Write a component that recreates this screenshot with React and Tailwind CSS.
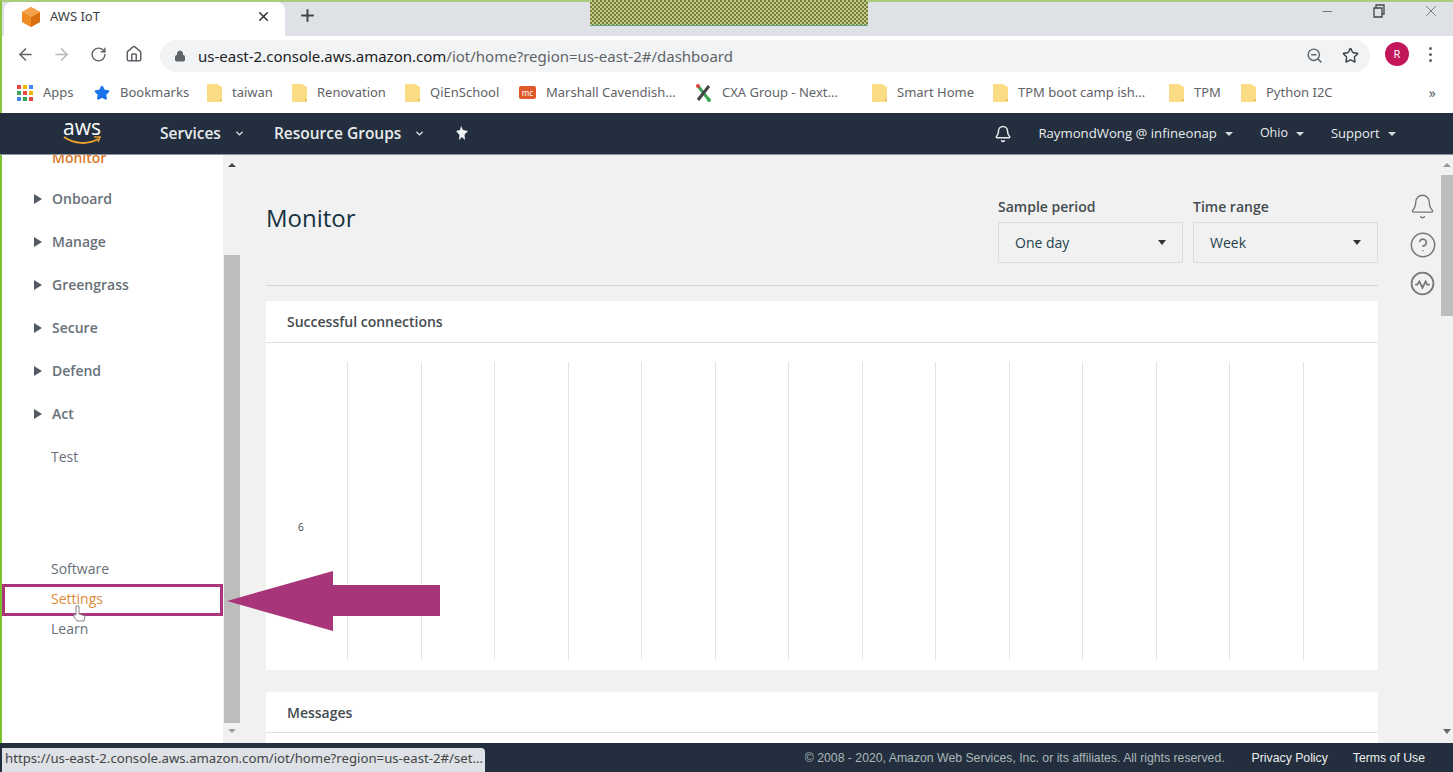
import React from 'react'
import { ArrowLeft, ArrowRight, RotateCw, House, Lock, ZoomOut, Star, Bell, CircleHelp, X, Plus, Minus, ChevronDown } from 'lucide-react'

const uiFont = "font-['Noto_Sans',sans-serif]"
const consoleFont = "font-['Open_Sans',sans-serif]"

const Folder = () => (
  <svg width="15" height="20" viewBox="0 0 15 20" className="shrink-0">
    <path d="M0 1h10l5 3v15H0z" fill="#fbdc85" />
    <path d="M13 19v-3h2z" fill="#d9b95c" />
  </svg>
)

const AppsGrid = () => {
  const colors = ['#e8453c', '#f4b400', '#4285f4', '#34a853', '#e8453c', '#f4b400', '#4285f4', '#34a853', '#e8453c']
  return (
    <div className="grid grid-cols-3 gap-[2px] w-[16px] shrink-0">
      {colors.map((c, i) => (
        <span key={i} className="w-1 h-1" style={{ background: c }} />
      ))}
    </div>
  )
}

const McIcon = () => (
  <div className="w-[17px] h-[13px] bg-[#e0592a] rounded-[2px] text-white text-[8px] leading-[13px] text-center shrink-0">mc</div>
)

const CxaIcon = () => (
  <svg width="17" height="20" viewBox="0 0 17 20" className="shrink-0">
    <path d="M3 3l11 14" stroke="#3aa655" strokeWidth="3" />
    <path d="M14 3L3 17" stroke="#444" strokeWidth="3" />
    <circle cx="3" cy="3" r="2" fill="#d9443a" />
    <circle cx="14" cy="17" r="2" fill="#3aa655" />
  </svg>
)

const bookmarks = [
  { icon: <AppsGrid />, label: 'Apps', cls: 'w-[31px]' },
  { icon: <Star size={16} fill="#1a73e8" stroke="#1a73e8" className="shrink-0" />, label: 'Bookmarks', cls: 'w-[67px]' },
  { icon: <Folder />, label: 'taiwan', cls: 'w-[40px]' },
  { icon: <Folder />, label: 'Renovation', cls: 'w-[68px]' },
  { icon: <Folder />, label: 'QiEnSchool', cls: 'w-[69px]' },
  { icon: <McIcon />, label: 'Marshall Cavendish...', cls: 'w-[126px] mr-[3px]' },
  { icon: <CxaIcon />, label: 'CXA Group - Next...', cls: 'w-[120px] mr-[10px]' },
  { icon: <Folder />, label: 'Smart Home', cls: 'w-[76px]' },
  { icon: <Folder />, label: 'TPM boot camp ish...', cls: 'w-[128px] mr-[3px]' },
  { icon: <Folder />, label: 'TPM', cls: 'w-[27px]' },
  { icon: <Folder />, label: 'Python I2C', cls: 'w-[66px]' },
]

const navItems = [
  { label: 'Onboard', arrow: true },
  { label: 'Manage', arrow: true },
  { label: 'Greengrass', arrow: true },
  { label: 'Secure', arrow: true },
  { label: 'Defend', arrow: true },
  { label: 'Act', arrow: true },
  { label: 'Test', arrow: false },
]

const gridLines = Array.from({ length: 14 })

const Caret = () => (
  <span className="w-0 h-0 ml-[8px] border-x-[4px] border-x-transparent border-t-[4px] border-t-[#d5dbdb]" />
)

const Select = ({ label, value }) => (
  <div className="w-[185px]">
    <div className="text-[14px] leading-[20px] font-semibold text-[#444c4f]">{label}</div>
    <div className="mt-[5px] h-[41px] border border-[#dcdcdc] rounded-[2px] flex items-center justify-between px-[16px] text-[14px] text-[#24424c]">
      <span>{value}</span>
      <span className="w-0 h-0 border-x-[4.5px] border-x-transparent border-t-[5px] border-t-[#333]" />
    </div>
  </div>
)

const App = () => {
  return (
    <div className="relative w-full h-[772px] overflow-hidden bg-white flex flex-col">
      {/* tab strip */}
      <div className={`h-[36px] shrink-0 bg-[#dee1e6] flex items-start border-t-2 border-t-[#a9cc7f] border-l-2 border-l-[#8cc63f] ${uiFont}`}>
        <div className="ml-[2px] w-[281px] h-[34px] bg-white rounded-t-[8px] flex items-center pl-[18px] pr-[14px] pb-[5px] text-[13px] text-[#3c4043]">
          <svg width="18" height="20" viewBox="0 0 18 20" className="shrink-0">
            <path d="M9 0l9 5v10l-9 5-9-5V5z" fill="#f08b22" />
            <path d="M9 10l9-5v10l-9 5z" fill="#d96f12" />
            <path d="M9 0l9 5-9 5-9-5z" fill="#f6a24a" />
          </svg>
          <span className="ml-[10px] flex-1">AWS IoT</span>
          <X size={15} strokeWidth={2.5} className="text-[#333]" />
        </div>
        <Plus size={19} strokeWidth={2.5} className="ml-[13px] mt-[4px] text-[#444]" />
        <div className="ml-[273px] -mt-[2px] w-[278px] h-[26px] border-b border-[#5aa58f] bg-[#8f9a4e] bg-[repeating-conic-gradient(#77803a_0_25%,#c4c98a_0_50%)] bg-[length:4px_4px]" />
        <div className="ml-auto flex items-center text-[#555]">
          <Minus size={15} strokeWidth={1.25} />
          <svg width="14" height="14" viewBox="0 0 14 14" fill="none" stroke="#444" strokeWidth="1.3" className="ml-[37px]">
            <path d="M2 4h8v9H2zM4 4V1h8v9h-2" />
          </svg>
          <X size={18} strokeWidth={1} className="ml-[36px] mr-[13px]" />
        </div>
      </div>

      {/* toolbar */}
      <div className={`h-[36px] shrink-0 bg-white flex items-center text-[#5f6368] border-l-2 border-l-[#8cc63f] ${uiFont}`}>
        <ArrowLeft size={19} className="ml-[14px] shrink-0" />
        <ArrowRight size={19} className="ml-[17px] shrink-0 text-[#b5b8bb]" />
        <RotateCw size={17} className="ml-[19px] shrink-0" />
        <House size={18} className="ml-[18px] shrink-0" />
        <div className="ml-[17px] w-[1210px] h-[32px] rounded-full bg-[#f1f3f4] flex items-center pl-[14px] pr-[8px] mt-[3px]">
          <Lock size={12} fill="#5f6368" className="shrink-0" />
          <span className="ml-[12px] flex-1 text-[15px] whitespace-nowrap text-[#5f6368] pt-[1px]">
            <span className="text-[#202124]">us-east-2.console.aws.amazon.com</span>/iot/home?region=us-east-2#/dashboard
          </span>
          <ZoomOut size={17} className="mr-[19px]" />
          <Star size={17} className="mr-[3px] text-[#3c4043]" />
        </div>
        <div className="ml-[15px] w-[24px] h-[24px] rounded-full bg-[#c2185b] text-white text-[11px] flex items-center justify-center">R</div>
        <div className="ml-[20px] flex flex-col gap-[3px]">
          <span className="w-[3px] h-[3px] rounded-full bg-[#5f6368]" />
          <span className="w-[3px] h-[3px] rounded-full bg-[#5f6368]" />
          <span className="w-[3px] h-[3px] rounded-full bg-[#5f6368]" />
        </div>
      </div>

      {/* bookmarks bar */}
      <div className={`h-[41px] shrink-0 bg-white flex items-center pl-[15px] gap-[20px] text-[13px] text-[#5f6368] whitespace-nowrap border-l-2 border-l-[#8cc63f] ${uiFont}`}>
        {bookmarks.map((b) => (
          <div key={b.label} className="flex items-center gap-[10px]">
            {b.icon}
            <span className={b.cls}>{b.label}</span>
          </div>
        ))}
        <span className="ml-auto mr-[17px] text-[14px]">»</span>
      </div>

      {/* aws nav */}
      <div className={`h-[42px] shrink-0 bg-[#232f3e] border-b border-[#8a949c] flex items-center text-[#e9ebed] whitespace-nowrap ${consoleFont}`}>
        <div className="ml-[60px] w-[44px] flex flex-col items-center leading-none">
          <span className="text-[21px] leading-[18px] -mt-[4px] text-white">aws</span>
          <svg width="40" height="10" viewBox="0 0 40 10" fill="none">
            <path d="M2 1c10 7 24 8 34 2" stroke="#f0a030" strokeWidth="2" />
            <path d="M32 1l6 0-2 5" stroke="#f0a030" strokeWidth="1.6" />
          </svg>
        </div>
        <span className="ml-[56px] text-[15.5px] font-semibold">Services</span>
        <ChevronDown size={11} strokeWidth={3} className="ml-[13px]" />
        <span className="ml-[29px] text-[15.5px] font-semibold">Resource Groups</span>
        <ChevronDown size={11} strokeWidth={3} className="ml-[13px]" />
        <svg width="14" height="15" viewBox="0 0 14 15" fill="#f2f3f3" className="ml-[30px]">
          <path d="M6 0l2 4 5 1-3.500 3.500L10 14 7 11 4 14l.5-5L1 5l4-1z" />
        </svg>
        <Bell size={18} className="ml-[525px]" />
        <span className="ml-[26px] text-[13.2px]">RaymondWong @ infineonap</span>
        <Caret />
        <span className="ml-[27px] text-[12.5px]">Ohio</span>
        <Caret />
        <span className="ml-[27px] text-[13px]">Support</span>
        <Caret />
      </div>

      {/* body */}
      <div className={`flex-1 min-h-0 flex border-l-2 border-l-[#7cc230] ${consoleFont}`}>
        <aside className="w-[221px] shrink-0 bg-white overflow-hidden text-[14px] text-[#687078]">
          <div className="-mt-[8px] h-[30px] pl-[50px] leading-[22px] font-semibold text-[#dd7a2b]">Monitor</div>
          {navItems.map((item) => (
            <div key={item.label} className={`h-[43px] flex items-center ${item.arrow ? 'font-semibold pl-[32px]' : 'pl-[49px]'}`}>
              {item.arrow && (
                <span className="w-0 h-0 mr-[10px] border-y-[5px] border-y-transparent border-l-[8px] border-l-[#545b64]" />
              )}
              {item.label}
            </div>
          ))}
          <div className="mt-[75px] h-[30px] pl-[49px] flex items-center">Software</div>
          <div className="h-[30px] pl-[49px] flex items-center text-[#dd8a3c]">Settings</div>
          <div className="h-[30px] pl-[49px] flex items-center">Learn</div>
        </aside>

        {/* sidebar scrollbar */}
        <div className="w-[17px] shrink-0 bg-[#f1f1f1] flex flex-col items-center">
          <span className="mt-[8px] w-0 h-0 border-x-[4px] border-x-transparent border-b-[4px] border-b-[#444]" />
          <div className="mt-[88px] w-[16px] h-[468px] bg-[#bdbdbd]" />
          <span className="mt-[6px] w-0 h-0 border-x-[4px] border-x-transparent border-t-[4px] border-t-[#a0a0a0]" />
        </div>

        {/* main */}
        <main className="flex-1 min-w-0 bg-[#f1f1f1] flex overflow-hidden">
          <div className="ml-[26px] w-[1112px] shrink-0">
            <div className="h-[131px] border-b border-[#d5d5d5] flex justify-between">
              <h1 className="mt-[47px] text-[24px] leading-[32px] text-[#16323f]">Monitor</h1>
              <div className="mt-[42px] flex gap-[10px]">
                <Select label="Sample period" value="One day" />
                <Select label="Time range" value="Week" />
              </div>
            </div>
            <section className="mt-[15px] h-[369px] bg-white flex flex-col">
              <div className="h-[42px] shrink-0 border-b border-[#dedede] pl-[21px] flex items-center text-[14px] font-semibold text-[#444c4f]">
                Successful connections
              </div>
              <div className="relative flex-1 pt-[19px] pb-[10px] pl-[81px] flex">
                {gridLines.map((_, i) => (
                  <div key={i} className="w-[73.5px] h-full border-l border-[#e4e4e4] shrink-0" />
                ))}
                <span className="absolute left-[32px] top-[177px] text-[10px] text-[#444]">6</span>
              </div>
            </section>
            <section className="mt-[22px] bg-white h-[60px]">
              <div className="h-[41px] border-b border-[#dedede] pl-[21px] flex items-center text-[14px] font-semibold text-[#444c4f]">
                Messages
              </div>
            </section>
          </div>

          {/* right rail */}
          <div className="w-[63px] shrink-0 flex flex-col items-center text-[#777] pl-[26px]">
            <Bell size={27} strokeWidth={1.2} className="mt-[38px]" />
            <CircleHelp size={28} strokeWidth={1.3} className="mt-[11px]" />
            <svg width="25" height="25" viewBox="0 0 24 24" fill="none" stroke="currentColor" strokeWidth="1.7" className="mt-[12px]">
              <circle cx="12" cy="12" r="10.500" />
              <path d="M5 13h2l2-3 3 6 3-6 1.500 3H19" />
            </svg>
          </div>

          {/* page scrollbar */}
          <div className="w-[12px] shrink-0 flex flex-col items-center">
            <span className="mt-[8px] w-0 h-0 border-x-[4px] border-x-transparent border-b-[4px] border-b-[#999]" />
            <div className="mt-[8px] w-full h-[141px] bg-[#bdbdbd]" />
            <span className="mt-[413px] w-0 h-0 border-x-[4px] border-x-transparent border-t-[5px] border-t-[#666]" />
          </div>
        </main>
      </div>

      {/* footer */}
      <footer className="h-[29px] shrink-0 bg-[#232f3e] flex items-center justify-end pr-[28px] pt-[2px] text-[12.25px] whitespace-nowrap font-['Liberation_Sans',sans-serif]">
        <span className="text-[#aab7b8]">© 2008 - 2020, Amazon Web Services, Inc. or its affiliates. All rights reserved.</span>
        <span className="ml-[27px] text-[#eaeded]">Privacy Policy</span>
        <span className="ml-[25px] text-[#eaeded]">Terms of Use</span>
      </footer>

      {/* link status bubble */}
      <div className={`absolute left-[2px] bottom-0 w-[483px] h-[24px] bg-[#dee1e6] rounded-tr-[4px] pl-[3px] pb-[2px] flex items-center text-[13.2px] text-[#444] whitespace-nowrap ${uiFont}`}>
        https://us-east-2.console.aws.amazon.com/iot/home?region=us-east-2#/set...
      </div>

      {/* tutorial callout over the page */}
      <div className="absolute left-[2px] top-[584px] w-[221px] h-[32px] border-[3px] border-[#a8357a]" />
      <svg width="215" height="62" viewBox="0 0 215 62" className="absolute left-[226px] top-[570px]">
        <path d="M1 31L107 1v14h107v31H107v15z" fill="#a8357a" />
      </svg>
      <svg width="14" height="18" viewBox="0 0 14 18" fill="white" stroke="#888" strokeWidth="1" className="absolute left-[73px] top-[605px]">
        <path d="M3 1v9L1 9v3l3 4h7l1-5-6-2V1z" />
      </svg>
    </div>
  )
}

export default App
